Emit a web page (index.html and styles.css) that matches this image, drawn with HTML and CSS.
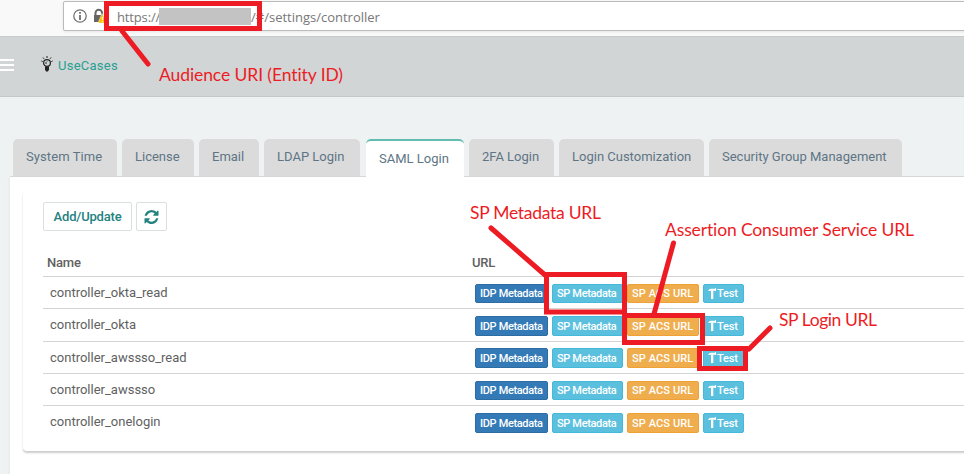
FILE: index.html
```html
<!DOCTYPE html>
<html lang="en">
<head>
<meta charset="utf-8">
<title>Controller settings</title>
<link rel="stylesheet" href="styles.css">
</head>
<body>
<div class="browser">
  <div class="address">
    <svg class="info" width="14" height="14" viewBox="0 0 14 14"><circle cx="7" cy="7" r="6.2" fill="none" stroke="#737373" stroke-width="1.3"/><path d="M7 6v5M7 3v1.8" stroke="#666" stroke-width="1.7"/></svg>
    <svg class="lock" width="14" height="16" viewBox="0 0 14 16"><path d="M2.500 8V5a3.300 3.300 0 0 1 6.600 0v3" fill="none" stroke="#666" stroke-width="2"/><path d="M1 7h9v7H1z" fill="#666"/><path d="M9 5.500 14 15H5z" fill="#ffbf00" stroke="#f8f8f8" stroke-width=".5"/><path d="M9.400 9v3M9.400 13v1" stroke="#fff"/></svg>
    <span class="url">https://</span><span class="redacted"></span><span class="url path">/#/settings/controller</span>
  </div>
</div>
<header class="topbar">
  <div class="menu"><i></i><i></i><i></i></div>
  <svg class="bulb" width="12" height="16" viewBox="0 0 12 16"><circle cx="6" cy="7" r="3.4" fill="none" stroke="#222" stroke-width="1.2"/><path d="M4 10.500h4v3L7 15.500H5L4 13.500z" fill="#222"/><path d="M6 0v2M2 1.500l1 1.300M10 1.500 9 2.800M.3 5l1.400.6M11.700 5l-1.400.6M5 8V6.500l1-1" fill="none" stroke="#222"/></svg>
  <a class="usecases">UseCases</a>
</header>
<main class="panel">
  <nav class="tabs">
    <a class="tab t1">System Time</a><a class="tab t2">License</a><a class="tab t3">Email</a><a class="tab t4">LDAP Login</a><a class="tab t5 active">SAML Login</a><a class="tab t6">2FA Login</a><a class="tab t7">Login Customization</a><a class="tab t8">Security Group Management</a>
  </nav>
  <section class="card">
    <div class="tools">
      <button class="tool add">Add/Update</button>
      <button class="tool refresh"><svg width="15" height="14" viewBox="0 0 1536 1536"><path fill="#23827f" d="M1511 928q0 5-1 7-64 268-268 434.500T764 1536q-146 0-282.500-55T238 1324l-129 129q-19 19-45 19t-45-19-19-45V960q0-26 19-45t45-19h448q26 0 45 19t19 45-19 45l-137 137q71 66 161 102t187 36q134 0 250-65t186-179q11-17 53-117 8-23 30-23h192q13 0 22.500 9.500t9.500 22.500zm25-800v448q0 26-19 45t-45 19h-448q-26 0-45-19t-19-45 19-45l138-138Q969 256 768 256q-134 0-250 65T332 500q-11 17-53 117-8 23-30 23H50q-13 0-22.500-9.500T18 608v-7q65-268 270-434.500T768 0q146 0 284 55.500T1297 212l130-129q19-19 45-19t45 19 19 45z"/></svg></button>
    </div>
    <table class="grid">
      <thead><tr><th class="name">Name</th><th>URL</th></tr></thead>
      <tbody>
        <tr><td>controller_okta_read</td><td><div class="links"><a class="b idp">IDP Metadata</a><a class="b sp">SP Metadata</a><a class="b acs">SP ACS URL</a><a class="b test"><svg width="8" height="11" viewBox="0 0 8 11"><path d="M0 3Q1 .8 3 .8h4V0h1v3H7L5.300 2.500V11H3V2.500L1.500 3z" fill="#fff"/></svg>Test</a></div></td></tr>
        <tr class="tall long"><td>controller_okta</td><td><div class="links"><a class="b idp">IDP Metadata</a><a class="b sp">SP Metadata</a><a class="b acs">SP ACS URL</a><a class="b test"><svg width="8" height="11" viewBox="0 0 8 11"><path d="M0 3Q1 .8 3 .8h4V0h1v3H7L5.300 2.500V11H3V2.500L1.500 3z" fill="#fff"/></svg>Test</a></div></td></tr>
        <tr class="long high"><td>controller_awssso_read</td><td><div class="links"><a class="b idp">IDP Metadata</a><a class="b sp">SP Metadata</a><a class="b acs">SP ACS URL</a><a class="b test"><svg width="8" height="11" viewBox="0 0 8 11"><path d="M0 3Q1 .8 3 .8h4V0h1v3H7L5.300 2.500V11H3V2.500L1.500 3z" fill="#fff"/></svg>Test</a></div></td></tr>
        <tr class="low"><td>controller_awssso</td><td><div class="links"><a class="b idp">IDP Metadata</a><a class="b sp">SP Metadata</a><a class="b acs">SP ACS URL</a><a class="b test"><svg width="8" height="11" viewBox="0 0 8 11"><path d="M0 3Q1 .8 3 .8h4V0h1v3H7L5.300 2.500V11H3V2.500L1.500 3z" fill="#fff"/></svg>Test</a></div></td></tr>
        <tr class="long"><td>controller_onelogin</td><td><div class="links"><a class="b idp">IDP Metadata</a><a class="b sp">SP Metadata</a><a class="b acs">SP ACS URL</a><a class="b test"><svg width="8" height="11" viewBox="0 0 8 11"><path d="M0 3Q1 .8 3 .8h4V0h1v3H7L5.300 2.500V11H3V2.500L1.500 3z" fill="#fff"/></svg>Test</a></div></td></tr>
      </tbody>
    </table>
  </section>
</main>
<svg class="notes" width="964" height="474" viewBox="0 0 964 474">
  <g fill="none" stroke="#ed1c24" stroke-width="5">
    <path d="M106.500 3.500h153v25h-153z"/>
    <path d="M546.500 274.500h78v37.500h-78z"/>
    <path d="M624.500 315.500h78v27h-78z"/>
    <path d="M699.500 348.500h46v20h-46z"/>
    <path d="M122 31l26 33M491 228l54 47M673.500 243 654 314M770 328l-21 21" stroke-linecap="round"/>
  </g>
  <g class="labels">
    <text x="159" y="81" textLength="184">Audience URI (Entity ID)</text>
    <text x="470" y="219" textLength="131">SP Metadata URL</text>
    <text x="665" y="236" textLength="249">Assertion Consumer Service URL</text>
    <text x="779" y="326" textLength="98">SP Login URL</text>
  </g>
</svg>
</body>
</html>
```

FILE: styles.css
```css
* { box-sizing: border-box; }
body {
  margin: 0;
  width: 964px;
  height: 474px;
  overflow: hidden;
  position: relative;
  background: #eef2f3;
  font-family: Roboto, "Liberation Sans", sans-serif;
  font-size: 13px;
  color: #616161;
}
.browser { height: 36px; padding: 1px 0 0 63px; background: #f9f9fa; }
.address {
  display: flex;
  align-items: center;
  width: 910px;
  height: 30px;
  padding-left: 9px;
  background: #fff;
  border: 1px solid #bbb;
  border-radius: 2px;
  box-shadow: 0 1px 3px rgba(0,0,0,.08);
}
.lock { margin-left: 6px; }
.url { margin: 2px 0 0 10px; font: 13px/20px "Open Sans", sans-serif; color: #777; white-space: nowrap; }
.url:first-of-type { width: 42px; letter-spacing: -.15px; }
.redacted { width: 92px; height: 17px; background: #c3c3c3; }
.url.path { margin-left: 0; letter-spacing: 0; }
.topbar {
  display: flex;
  height: 61px;
  background: #d1d5d6;
  border-top: 1px solid #c8cbcc;
  border-bottom: 1px solid #c4c8c9;
}
.menu { width: 14px; padding-top: 22px; }
.menu i { display: block; height: 2px; margin-bottom: 3px; background: #fff; }
.bulb { margin: 19px 0 0 27px; }
.usecases { margin: 20px 0 0 5px; line-height: 17px; letter-spacing: .25px; color: #26a092; }
.panel {
  height: 377px;
  margin-left: 10px;
  padding-top: 42px;
  background: linear-gradient(#eef2f3 79px, #fff 79px);
  box-shadow: 0 80px 3px rgba(0,0,0,.08);
}
.tabs { display: flex; gap: 5px; height: 38px; padding-left: 3px; border-bottom: 1px solid #d6d7d8; }
.tab {
  height: 37px;
  flex: none;
  padding-left: 13px;
  line-height: 35px;
  white-space: nowrap;
  background: #dbdbdb;
  border-radius: 5px 5px 0 0;
  color: #5d7585;
}
.active { height: 38px; margin-left: 1px; background: #fff; border-top: 2px solid #62bdb0; }
.t1 { width: 104px; letter-spacing: .08px; }
.t2 { width: 72px; }
.t3 { width: 60px; }
.t4 { width: 96px; }
.t5 { width: 98px; }
.t6 { width: 85px; }
.t7 { width: 145px; }
.t8 { width: 193px; }
.card {
  height: 260px;
  margin: 14px -20px 0 13px;
  padding: 11px 0 0 20px;
  background: #fff;
  border-radius: 4px;
  box-shadow: 0 2px 2px rgba(0,0,0,.2);
}
.tools { display: flex; gap: 4px; height: 46px; }
.tool {
  height: 29px;
  padding: 0;
  background: #fff;
  border: 1px solid #dadfe0;
  border-radius: 2px;
  font: 500 13px Roboto, sans-serif;
  color: #23827f;
}
.add { width: 89px; letter-spacing: -.2px; }
.refresh { width: 31px; display: grid; place-items: center; }
.grid { width: 951px; border-spacing: 0; table-layout: fixed; }
th { height: 28px; padding: 0 4px; font-weight: 500; letter-spacing: -.2px; text-align: left; }
.name { width: 425px; }
td { height: 32px; padding: 0 7px; border-top: 1px solid #d4d4d4; line-height: 20px; }
td:last-child { padding-top: 7px; vertical-align: top; }
.high td:last-child { padding-top: 6px; }
.tall td { height: 33px; }
.low td:first-child { padding-top: 1px; }
.links { display: flex; gap: 4px; }
.b {
  height: 19px;
  padding-left: 4px;
  font-size: 11px;
  font-weight: 500;
  line-height: 18px;
  white-space: nowrap;
  color: #fff;
  border: 1px solid;
  border-radius: 2px;
}
.long .b { height: 20px; line-height: 19px; }
.idp { width: 73px; letter-spacing: -.35px; background: #337ab7; border-color: #2e6da4; }
.sp { width: 71px; letter-spacing: -.35px; background: #5bc0de; border-color: #46b8da; }
.acs { width: 72px; letter-spacing: .1px; background: #f0ad4e; border-color: #eea236; }
.test { display: flex; align-items: center; gap: 1px; width: 41px; letter-spacing: -.2px; background: #5bc0de; border-color: #46b8da; }
.test svg { margin-top: -1px; }
.notes { position: absolute; top: 0; left: 0; }
.labels { font: 17.5px Lato, "Open Sans", sans-serif; font-variant-ligatures: none; fill: #ed1c24; }
```
